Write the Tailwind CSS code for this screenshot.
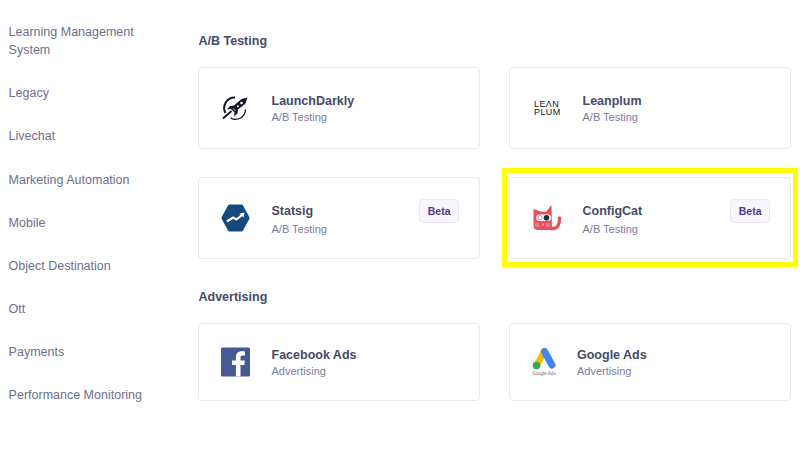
<!DOCTYPE html>
<html lang="en">
<head>
  <meta charset="UTF-8">
  <title>Sources</title>
  <script src="https://cdn.jsdelivr.net/npm/@tailwindcss/browser@4"></script>
</head>
<body class="w-[800px] h-[450px] overflow-hidden bg-white font-['Liberation_Sans',sans-serif]">
  <div class="flex h-full">
    <!-- categories -->
    <ul class="w-[198px] shrink-0 pl-[8.6px] pt-[23px] pr-[40px] flex flex-col gap-[25.18px] text-[12.5px] leading-[18px] text-[#6b6f8e]">
      <li>Learning Management System</li>
      <li>Legacy</li>
      <li>Livechat</li>
      <li>Marketing Automation</li>
      <li>Mobile</li>
      <li>Object Destination</li>
      <li>Ott</li>
      <li>Payments</li>
      <li class="whitespace-nowrap">Performance Monitoring</li>
    </ul>

    <main class="w-[593px] shrink-0 pt-[32px]">
      <h2 class="pl-[.5px] text-[12.5px] leading-[18px] font-bold text-[#474a68]">A/B Testing</h2>
      <div class="mt-[17px] grid grid-cols-[282px_282px] gap-x-[29px] gap-y-[28px]">
        <div class="h-[82px] flex items-center border border-[#e7e7f0] rounded pl-[22px] pr-5">
          <svg class="w-[30px] h-[30px] shrink-0" viewBox="0 0 30 30">
            <path d="M14 4.500A10.500 10.500 0 0 0 4.500 20" fill="none" stroke="#12192b" stroke-width="2"/>
            <path d="M9.500 25A10 10 0 0 0 24.500 16.500" fill="none" stroke="#12192b" stroke-width="1.300"/>
            <path d="M26.500 4.500 20.500 6 13 12.500 9 13 6 16.500 10 16 13.500 19.500 13 23.500 16.500 20.500 17 16.500 24.500 10.500Z" fill="#12192b"/>
            <path d="M2 25.500 10.500 18" stroke="#12192b" stroke-width="1.800"/>
            <circle cx="20.500" cy="10" r="1.300" fill="#fff"/>
            <circle cx="16.800" cy="13.200" r="1" fill="#fff"/>
            <path d="M12 15.500 14.500 18" stroke="#fff" stroke-width=".8"/>
          </svg>
          <div class="ml-[20.5px]">
            <div class="text-[12.5px] leading-[18px] font-bold text-[#474a68]">LaunchDarkly</div>
            <div class="text-[11px] leading-[15px] text-[#7a7e9d]">A/B Testing</div>
          </div>
        </div>

        <div class="h-[82px] flex items-center border border-[#e7e7f0] rounded pl-[22px] pr-5">
          <div class="w-[30px] shrink-0 pl-[2px] text-[9px] leading-[8.5px] tracking-[0.4px] text-[#15151c] whitespace-nowrap">
            <div>LEΛN</div>
            <div>PLUM</div>
          </div>
          <div class="ml-[20.5px]">
            <div class="text-[12.5px] leading-[18px] font-bold text-[#474a68]">Leanplum</div>
            <div class="text-[11px] leading-[15px] text-[#7a7e9d]">A/B Testing</div>
          </div>
        </div>

        <div class="h-[82px] flex items-center border border-[#e7e7f0] rounded pl-[22px] pr-5">
          <svg class="w-[30px] h-[30px] shrink-0" viewBox="0 0 30 30">
            <path d="M8.500 1.500H20.500Q21.500 1.500 22 2.500L28.300 14Q28.800 15 28.300 16L22 27.500Q21.500 28.500 20.500 28.500H8.500Q7.500 28.500 7 27.500L.7 16Q.2 15 .7 14L7 2.500Q7.500 1.500 8.500 1.500Z" fill="#174a7c"/>
            <path d="M6 18.500 12 14.500 15.500 16.500 21 12" fill="none" stroke="#fff" stroke-width="2.200"/>
            <path d="M18.500 10.500 23.500 9.500 22.500 14.500Z" fill="#fff"/>
          </svg>
          <div class="ml-[20.5px] mt-[3px]">
            <div class="text-[12.5px] leading-[18px] font-bold text-[#474a68]">Statsig</div>
            <div class="text-[11px] leading-[15px] text-[#7a7e9d] mt-[2px]">A/B Testing</div>
          </div>
          <span class="ml-auto self-start mt-[21px] h-[24px] px-[7.5px] pt-[1px] flex items-center border border-[#ece4fa] bg-[#f9f6fe] rounded-[4px] text-[10.5px] font-bold text-[#4f3d86]">Beta</span>
        </div>

        <div class="relative h-[82px] flex items-center border border-[#e7e7f0] rounded pl-[22px] pr-5">
          <svg class="w-[30px] h-[30px] shrink-0" viewBox="0 0 30 30">
            <path d="M1.500 6 9.500 8.700H14L19.500 2 20 27H6Q1.500 27 1.500 22Z" fill="#e9505f"/>
            <path d="M19 25.500H22Q27.500 25 27.500 15" fill="none" stroke="#e9505f" stroke-width="3.300" stroke-linecap="round"/>
            <rect x="4.200" y="11.500" width="14.800" height="6.500" rx="3.200" fill="#fff"/>
            <circle cx="7.800" cy="14.700" r="2.200" fill="#fff" stroke="#f08a94" stroke-width="1"/>
            <circle cx="14.500" cy="14.700" r="2.800" fill="#12353c"/>
            <path d="M3 21H7M3 23H7M10 21H12M11 21V23M14 21H18M14 23H18" stroke="#fff" stroke-width=".7" opacity=".7"/>
          </svg>
          <div class="ml-[20.5px] mt-[3px]">
            <div class="text-[12.5px] leading-[18px] font-bold text-[#474a68]">ConfigCat</div>
            <div class="text-[11px] leading-[15px] text-[#7a7e9d] mt-[2px]">A/B Testing</div>
          </div>
          <span class="ml-auto self-start mt-[21px] h-[24px] px-[7.5px] pt-[1px] flex items-center border border-[#ece4fa] bg-[#f9f6fe] rounded-[4px] text-[10.5px] font-bold text-[#4f3d86]">Beta</span>
          <!-- highlight -->
          <div class="absolute -left-[8.5px] -right-[7.5px] -top-[10px] -bottom-[9px] border-[5px] border-[#ffff00]"></div>
        </div>
      </div>

      <h2 class="mt-[29px] pl-[.5px] text-[12.5px] leading-[18px] font-bold text-[#474a68]">Advertising</h2>
      <div class="mt-[17px] grid grid-cols-[282px_282px] gap-x-[29px]">
        <div class="h-[78px] flex items-center border border-[#e7e7f0] rounded pl-[22px] pr-5">
          <svg class="w-[30px] h-[30px] shrink-0" viewBox="0 0 30 30">
            <rect x="0" y=".5" width="29" height="29" rx="1.500" fill="#475993"/>
            <path d="M19.500 29.500V18H23.300L23.900 13.500H19.500V10.700C19.500 9.400 19.900 8.500 21.700 8.500H24V4.500C23.600 4.400 22.200 4.300 20.600 4.300 17.200 4.300 14.900 6.400 14.900 10.200V13.500H11V18H14.900V29.500Z" fill="#fff"/>
          </svg>
          <div class="ml-[20.5px]">
            <div class="text-[12.5px] leading-[18px] font-bold text-[#474a68]">Facebook Ads</div>
            <div class="text-[11px] leading-[15px] text-[#7a7e9d]">Advertising</div>
          </div>
        </div>

        <div class="h-[78px] flex items-center border border-[#e7e7f0] rounded pl-[22px] pr-5">
          <div class="w-[24px] shrink-0 flex flex-col items-center">
            <svg class="w-[24px] h-[22px]" viewBox="0 0 24 22">
              <path d="M12.500 3 5 17" stroke="#fbbc04" stroke-width="6.500" stroke-linecap="round"/>
              <path d="M12.500 3.500 20 17" stroke="#4285f4" stroke-width="7" stroke-linecap="round"/>
              <circle cx="4.500" cy="17.500" r="3.800" fill="#34a853"/>
            </svg>
            <span class="mt-[1px] text-[4.5px] leading-[5px] text-[#70757a] whitespace-nowrap">Google Ads</span>
          </div>
          <div class="ml-[21px]">
            <div class="text-[12.5px] leading-[18px] font-bold text-[#474a68]">Google Ads</div>
            <div class="text-[11px] leading-[15px] text-[#7a7e9d]">Advertising</div>
          </div>
        </div>
      </div>
    </main>
  </div>
</body>
</html>
